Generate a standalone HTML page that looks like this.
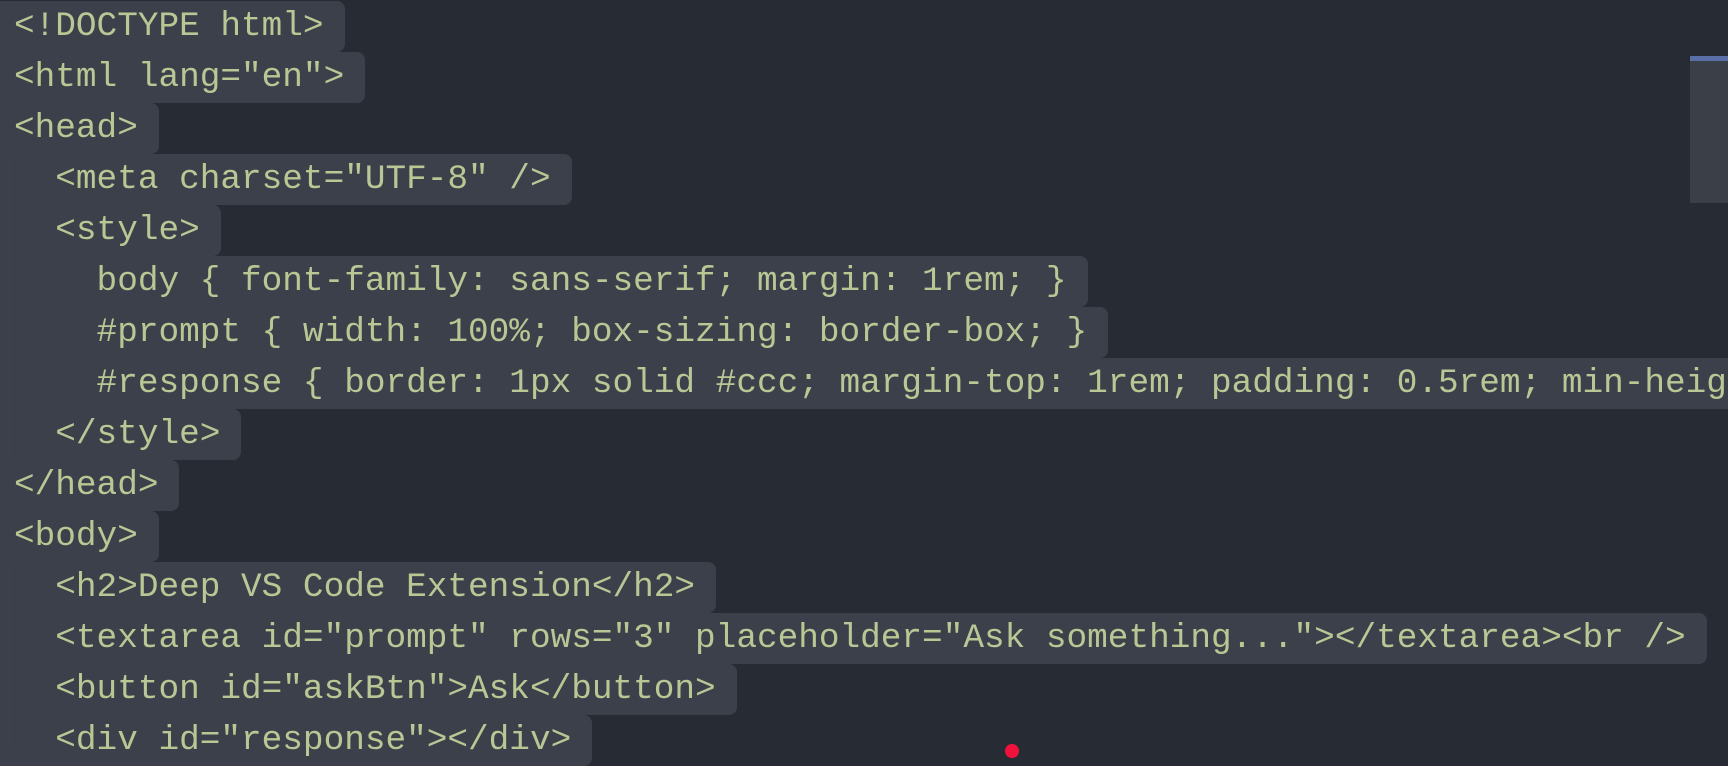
<!DOCTYPE html>
<html><head><style>
html,body{margin:0;padding:0;}
body{width:1728px;height:748px;overflow:hidden;background:#272b33;position:relative;font-family:"Liberation Mono",monospace;}
.l{position:absolute;left:0;right:0;overflow:hidden;height:51px;line-height:51px;font-size:34.4px;color:#b9c795;white-space:pre;}
.l span{display:inline-block;background:#3b404b;padding-left:14px;padding-right:21px;height:51px;border-radius:0 8px 8px 0;}
.g{position:absolute;left:14px;width:2px;background:#3a3f49;}
</style></head><body>
<div class="l" style="top:1px"><span>&lt;!DOCTYPE html&gt;</span></div>
<div class="l" style="top:52px"><span>&lt;html lang="en"&gt;</span></div>
<div class="l" style="top:103px"><span>&lt;head&gt;</span></div>
<div class="l" style="top:154px"><span>  &lt;meta charset="UTF-8" /&gt;</span></div>
<div class="l" style="top:205px"><span>  &lt;style&gt;</span></div>
<div class="l" style="top:256px"><span>    body { font-family: sans-serif; margin: 1rem; }</span></div>
<div class="l" style="top:307px"><span>    #prompt { width: 100%; box-sizing: border-box; }</span></div>
<div class="l" style="top:358px"><span>    #response { border: 1px solid #ccc; margin-top: 1rem; padding: 0.5rem; min-height: 2rem; }</span></div>
<div class="l" style="top:409px"><span>  &lt;/style&gt;</span></div>
<div class="l" style="top:460px"><span>&lt;/head&gt;</span></div>
<div class="l" style="top:511px"><span>&lt;body&gt;</span></div>
<div class="l" style="top:562px"><span>  &lt;h2&gt;Deep VS Code Extension&lt;/h2&gt;</span></div>
<div class="l" style="top:613px"><span>  &lt;textarea id="prompt" rows="3" placeholder="Ask something..."&gt;&lt;/textarea&gt;&lt;br /&gt;</span></div>
<div class="l" style="top:664px"><span>  &lt;button id="askBtn"&gt;Ask&lt;/button&gt;</span></div>
<div class="l" style="top:715px"><span>  &lt;div id="response"&gt;&lt;/div&gt;</span></div>
<div class="g" style="top:154px;height:306px"></div>
<div class="g" style="top:562px;height:186px"></div>
<div style="position:absolute;left:1690px;top:56px;width:38px;height:147px;background:#3a3f48;"></div>
<div style="position:absolute;left:1690px;top:56px;width:38px;height:5px;background:#5a6fa8;"></div>
<div style="position:absolute;left:1005px;top:744px;width:14px;height:14px;border-radius:50%;background:#f0123c;"></div>
</body></html>
